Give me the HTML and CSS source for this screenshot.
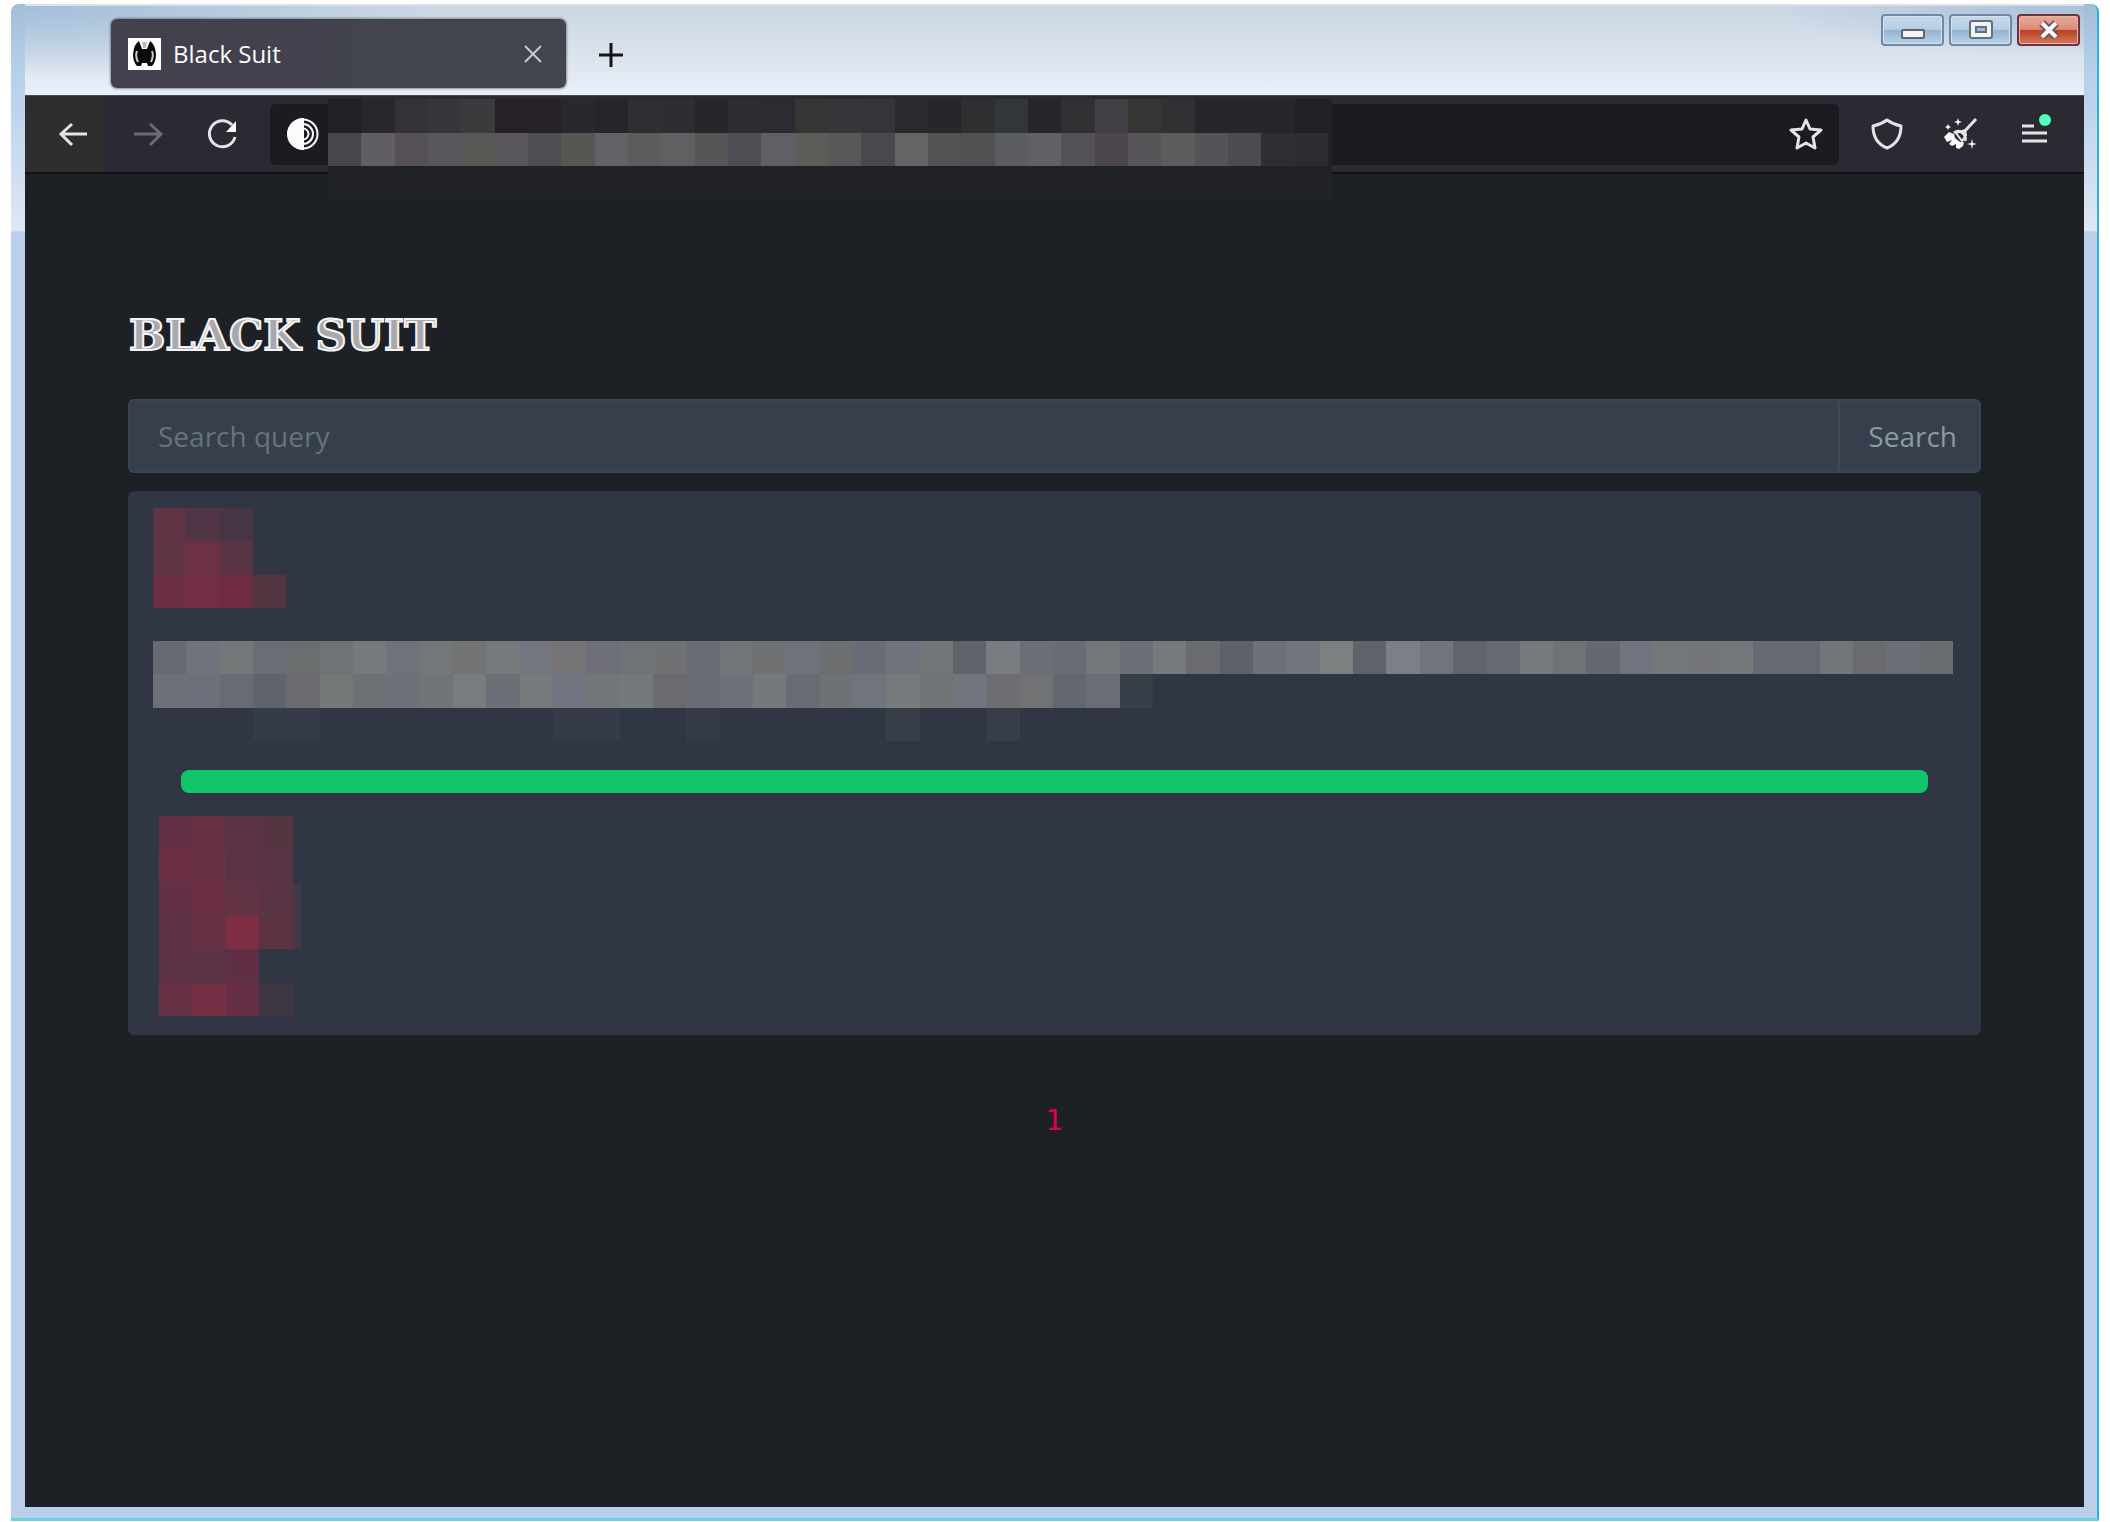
FILE: index.html
```html
<!DOCTYPE html>
<html lang="en">
<head>
  <meta charset="UTF-8">
  <meta name="viewport" content="width=device-width, initial-scale=1.0">
  <title>Black Suit</title>
  <link rel="stylesheet" href="styles.css">
</head>
<body>
  <div class="window">
    <div class="titlebar">
      <div class="tab">
        <svg class="favicon" viewBox="0 0 33 32">
          <rect width="33" height="32" fill="#fff"/>
          <path d="M11 3L14 11h5l3-8q5 3 6 13 0 8-4 12h-4l-1-3h-5l-1 3H9Q5 24 5 16 6 6 11 3z" fill="#0a0a0a"/>
          <path d="M14 4h5l-1 6h-3z" fill="#bbb"/>
          <path d="M9 13q-2 5 1 11M24 13q2 5-1 11" stroke="#ccc" stroke-width="2"/>
        </svg>
        <span class="tab-title">Black Suit</span>
        <button class="tab-close" aria-label="Close tab">
          <svg viewBox="0 0 18 18"><path d="M1 1l16 16M17 1L1 17"/></svg>
        </button>
      </div>
      <button class="new-tab" aria-label="New tab">
        <svg viewBox="0 0 26 26"><path d="M13 1v24M1 13h24"/></svg>
      </button>
      <div class="controls">
        <button class="control" aria-label="Minimize">
          <svg viewBox="0 0 24 20"><rect x="1" y="10" width="22" height="8" rx="1" fill="#f4f4f4" stroke="#5b6470" stroke-width="2"/></svg>
        </button>
        <button class="control" aria-label="Maximize">
          <svg viewBox="0 0 24 20"><rect x="1" y="1" width="22" height="17" rx="2" fill="#f4f4f4" stroke="#66707d" stroke-width="2"/><rect x="7" y="7" width="10" height="5" fill="#9dbbdc" stroke="#66707d" stroke-width="2"/></svg>
        </button>
        <button class="control close" aria-label="Close">
          <svg viewBox="0 0 24 20"><path d="M5 3l14 14M19 3L5 17" stroke="#6b5560" stroke-width="8"/><path d="M5 3l14 14M19 3L5 17" stroke="#f6f6f6" stroke-width="4"/></svg>
        </button>
      </div>
    </div>

    <div class="toolbar">
      <div class="tools">
        <button class="tool" aria-label="Back">
          <svg viewBox="0 0 42 42"><path d="M34 21H8M19 11L8 21l11 11"/></svg>
        </button>
        <button class="tool" aria-label="Forward" disabled>
          <svg viewBox="0 0 42 42"><path d="M7 21h27M23 11l11 10-11 11"/></svg>
        </button>
        <button class="tool" aria-label="Reload">
          <svg viewBox="0 0 42 42"><path d="M31 12A13 13 0 1 0 34 24"/><path d="M35 8v11H25z" fill="#fbfbfe" stroke="none"/></svg>
        </button>
      </div>
      <div class="urlbar">
        <svg class="onion" viewBox="0 0 32 32">
          <circle cx="16" cy="16" r="14.500"/>
          <path d="M16 6a10 10 0 0 1 0 20M16 10.500a5.500 5.500 0 0 1 0 11"/>
          <path d="M16 1a15 15 0 0 0 0 30z" fill="#fbfbfe"/>
        </svg>
        <div class="url-mask"><svg class="mosaic" id="urlMosaic" viewBox="0 0 30 2"></svg></div>
        <button class="tool" aria-label="Bookmark this page">
          <svg viewBox="0 0 42 42"><path d="M20 7l4 9 11 1-8 7 2 11-9-5-9 5 2-11-8-7 11-1z" stroke-linejoin="round"/></svg>
        </button>
      </div>
      <div class="tools">
        <button class="tool" aria-label="Security level">
          <svg viewBox="0 0 42 42"><path d="M21 7c4 3 9 5 14 6 0 10-4 18-14 22C11 31 7 23 7 13c5-1 10-3 14-6z" stroke-linejoin="round"/></svg>
        </button>
        <button class="tool" aria-label="New identity">
          <svg viewBox="0 0 42 42">
            <path d="M36 6L24 19M14 20c5-4 13 0 11 8"/>
            <path d="M4 24l5-5 5 2 1 4 5 4 4 0-1 4-4 3-3-1 0-4-4 2-3-2 3-4-5 2z" fill="#fbfbfe" stroke="none"/>
            <path d="M16 20l9-3 1 5-4 6z" stroke-width="2"/>
            <path d="M18 5l1 3 3 1-3 1-1 3-1-3-3-1 3-1zM8 11l1 2 2 1-2 1-1 2-1-2-2-1 2-1zM32 26l1 4 4 1-4 1-1 4-1-4-4-1 4-1z" fill="#fbfbfe" stroke="none"/>
          </svg>
        </button>
        <button class="tool" aria-label="Open menu">
          <svg viewBox="0 0 42 42"><path d="M8 13h12M8 20h25M8 28h25"/><circle cx="31" cy="7" r="6" fill="#54ffbd" stroke="none"/></svg>
        </button>
      </div>
    </div>

    <main class="page">
      <h1>BLACK SUIT</h1>
      <form class="search">
        <input type="text" placeholder="Search query" aria-label="Search query">
        <button type="submit">Search</button>
      </form>
      <section class="card">
        <svg class="mosaic card-title" id="titleMosaic" viewBox="0 0 4 3"></svg>
        <svg class="mosaic card-text" id="textMosaic" viewBox="0 0 54 3"></svg>
        <div class="progress"></div>
        <svg class="mosaic card-links" id="linksMosaic" viewBox="0 0 4.250 6"></svg>
      </section>
      <nav class="pagination"><a href="#">1</a></nav>
    </main>
  </div>
  <script src="mosaic.js"></script>
</body>
</html>
```
FILE: styles.css
```css
* {
  box-sizing: border-box;
}
body {
  margin: 0;
  padding: 4px 11px 1px;
  min-height: 100vh;
  display: flex;
  background: #fff;
  font-family: "Open Sans", "Noto Sans", sans-serif;
}
button {
  padding: 0;
  border: none;
  background: none;
  font: inherit;
}
svg {
  display: block;
  fill: none;
}

/* window frame */
.window {
  flex: 1;
  min-width: 0;
  display: flex;
  flex-direction: column;
  padding: 0 13px 11px 14px;
  border-right: 2px solid #35b0d5;
  border-bottom: 3px solid #6dd0e3;
  border-radius: 8px 8px 0 0;
  background: linear-gradient(#a3bdd6, #b4cfea 60px, #bcd3ec 100px, #dfe8f4 226px, #bad0ea 228px);
}
.titlebar {
  display: flex;
  align-items: flex-start;
  height: 91px;
  padding: 15px 4px 0 86px;
  border-top: 2px solid #dfe0e1;
  background:
    radial-gradient(ellipse 420px 70px at 0 0, #a3bfda, rgba(163, 191, 218, 0)),
    radial-gradient(ellipse 320px 50px at 100% 0, #a9c1d9, rgba(169, 193, 217, 0)),
    linear-gradient(#cad7e5, #d9e1eb 50%, #e9f0f9);
}
.tab {
  display: flex;
  align-items: center;
  width: 455px;
  height: 69px;
  margin-top: -2px;
  padding: 0 24px 0 17px;
  border-radius: 6px;
  background: linear-gradient(to right, #42414d 45%, #42454d 55%);
  box-shadow: 0 0 3px #33343f;
  color: #fbfbfe;
  font-size: 24px;
}
.favicon {
  width: 33px;
  height: 32px;
  margin-right: 12px;
}
.tab-title {
  flex: 1;
}
.tab-close svg {
  width: 18px;
  height: 18px;
  stroke: #c9c9cd;
  stroke-width: 2;
}
.new-tab {
  margin: 21px 0 0 32px;
}
.new-tab svg {
  width: 26px;
  height: 26px;
  stroke: #15141a;
  stroke-width: 3;
}
.controls {
  display: flex;
  gap: 5px;
  margin: -7px 0 0 auto;
}
.control {
  display: flex;
  align-items: center;
  justify-content: center;
  width: 63px;
  height: 32px;
  border: 2px solid #7088a3;
  border-radius: 4px;
  background: linear-gradient(#c5d8eb, #b6cee6 48%, #94b3d2 50%, #b8d2ea);
  box-shadow: inset 0 0 0 1px #d3e2f1;
}
.control svg {
  width: 24px;
  height: 20px;
}
.control.close {
  border-color: #6b3440;
  background: linear-gradient(#e9aa9c, #db8b79 48%, #b9401f 50%, #d57a5c);
  box-shadow: inset 0 0 0 1px #e9b3a5;
}

/* navigation toolbar */
.toolbar {
  display: flex;
  align-items: center;
  gap: 27px;
  height: 79px;
  padding: 0 28px;
  border-top: 1px solid #4a4b55;
  border-bottom: 2px solid #131317;
  background: linear-gradient(to right, #2e2e2e 80px, #2b2a33 81px);
}
.tools {
  display: flex;
  gap: 32px;
}
.tool svg {
  width: 42px;
  height: 42px;
  stroke: #e4e4e8;
  stroke-width: 3;
}
.tool:disabled {
  opacity: 0.35;
}
.urlbar {
  position: relative;
  flex: 1;
  display: flex;
  align-items: center;
  justify-content: space-between;
  height: 61px;
  padding: 0 11px 0 17px;
  border-radius: 6px;
  background: #1c1b22;
}
.onion {
  width: 32px;
  height: 32px;
  stroke: #fbfbfe;
  stroke-width: 2;
}
/* redaction over the address, hangs below the toolbar */
.url-mask {
  position: absolute;
  top: -5px;
  left: 58px;
  width: 1004px;
  height: 100px;
  background: #212226;
}
.url-mask .mosaic {
  width: 1000px;
  height: 67px;
}

/* page */
.page {
  flex: 1;
  padding: 139px 103px 0;
  background: #1d2025;
}
h1 {
  margin: 0;
  padding-left: 1px;
  font-family: "DejaVu Serif", serif;
  font-size: 43px;
  line-height: 44px;
  font-weight: bold;
  color: #a9a9ad;
  -webkit-text-stroke: 2px #f4f4f4;
}
.search {
  display: flex;
  height: 74px;
  margin: 42px 0 18px;
  border: 2px solid #3a4656;
  border-radius: 6px;
  background: #363f4b;
}
.search input {
  flex: 1;
  min-width: 0;
  padding: 0 28px;
  border: none;
  outline: none;
  background: none;
  color: #e3eaef;
  font: inherit;
  font-size: 28px;
}
.search input::placeholder {
  color: #67737d;
  opacity: 1;
}
.search button {
  padding: 0 22px 0 28px;
  border-left: 2px solid #3f4957;
  color: #8b9aa3;
  font-size: 28px;
}
.card {
  height: 544px;
  padding: 17px 28px 17px 25px;
  border-radius: 6px;
  background: #303643;
}
.mosaic {
  shape-rendering: crispEdges;
}
.card-title {
  width: 133px;
  height: 100px;
}
.card-text {
  width: 100%;
  height: 100px;
  margin-top: 33px;
}
.progress {
  height: 23px;
  margin: 29px 25px 23px 28px;
  border-radius: 8px;
  background: #10c469;
}
.card-links {
  width: 142px;
  height: 200px;
  margin-left: 6px;
}
.pagination {
  margin-top: 65px;
  text-align: center;
}
.pagination a {
  color: #e0004d;
  font-family: "DejaVu Sans", sans-serif;
  font-size: 28px;
  line-height: 42px;
  text-decoration: none;
}
```
FILE: mosaic.js
```js
// One string per row, one colour per cell, "-" leaves the cell empty
const mosaics = {
  urlMosaic: [
    "221f25 29262c 353237 39363b 3a3b3d 252127 252127 2a272e 28252a 302e33 2d2e31 28252b 302d32 2d2a31 353533 38353a 36343a 2b282f 29262b 2e2f31 323638 28252b 333034 434045 363634 303133 27242a 26272c 27242a 222025",
    "46474a 605d63 545056 57585b 565853 5a575c 4d4e54 565652 616265 5b5c5b 5f6062 565656 504e54 615f65 5b5d59 585858 4a484d 646464 525252 505252 5b5d60 606165 555257 4a464b 57555a 5b5c5b 525458 4d4a50 312e33 2d2a30"
  ],
  titleMosaic: [
    "603443 503547 483544",
    "5f3445 6d3144 583444",
    "6b2f45 742d44 702d41 533441"
  ],
  textMosaic: [
    "676a72 70727c 757879 6b6d76 6a6e6f 6e7476 777a7c 6e727b 727879 747373 777a7c 73767f 767377 6e6f78 707375 6f7173 696c74 727577 6f7173 6f727a 6c6e70 696c75 70737c 737678 60646a 797c80 6b6e76 696c74 747779 6d6f78 777a7d 696b6e 5e616a 6c7078 71757e 7b8180 60626a 7d7f88 71747c 60646b 666972 757b7d 6e7476 656870 71747e 75787b 737578 73787a 666972 666972 717779 696b6e 6b6e77 696c6f",
    "6d7078 6d707a 686b73 5f636b 696b6e 757879 6e7173 6e717a 717477 797c7f 6c6f78 767a7c 72757f 737678 73797b 696b6e 6a6c75 6e717a 76797c 6a6c75 6f7275 70747d 767a7c 717476 72757e 6c6e71 707274 63676f 6b6d76 373e48",
    "- - - 353b48 353b48 - - - - - - - 353b48 353b48 - - 353b48 - - - - - 373e48 - - 383d4a"
  ],
  linksMosaic: [
    "633145 663145 5b3345 563543",
    "6b2f45 683145 5b3345 593445",
    "633145 6b2f45 623245 593445 433845",
    "603245 663145 7e2d43 5d3342 433845",
    "5d3345 5a3344 602f45",
    "663145 752d43 672f46 3f3844"
  ]
};

for (const id in mosaics) {
  const svg = document.getElementById(id);
  svg.setAttribute("preserveAspectRatio", "none");
  mosaics[id].forEach((row, y) => {
    row.split(" ").forEach((color, x) => {
      if (color === "-") return;
      const cell = document.createElementNS("http://www.w3.org/2000/svg", "rect");
      cell.setAttribute("x", x);
      cell.setAttribute("y", y);
      cell.setAttribute("width", 1);
      cell.setAttribute("height", 1);
      cell.setAttribute("fill", "#" + color);
      svg.appendChild(cell);
    });
  });
}
```
